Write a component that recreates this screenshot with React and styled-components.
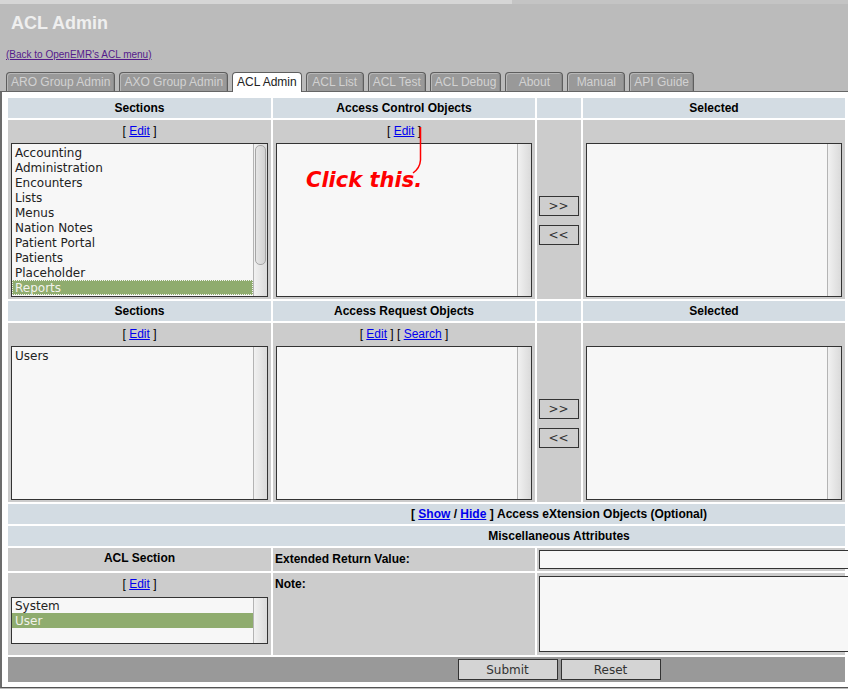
import React from "react"
import styled, { createGlobalStyle } from "styled-components"

const GlobalStyle = createGlobalStyle`
  html, body {
    margin: 0;
    padding: 0;
    overflow: hidden;
    background: #bbb;
  }
  body {
    font-family: "Liberation Sans", Arial, sans-serif;
  }
`

const Page = styled.div`
  position: relative;
  width: 848px;
  height: 689px;
  overflow: hidden;
  background: #bbb;
`

const TopStrip = styled.div`
  height: 4px;
  background: linear-gradient(to right, #d6d6d6 512px, #c4c4c4 512px);
`

const Header = styled.header`
  padding-top: 9px;
`

const Title = styled.h1`
  margin: 0;
  padding-left: 11px;
  font-size: 18px;
  line-height: 21px;
  font-weight: bold;
  color: #efefef;
`

const BackLink = styled.a`
  display: inline-block;
  margin: 15px 0 0 6px;
  font-size: 10px;
  line-height: 12px;
  color: #551a8b;
  text-decoration: underline;
`

const TabBar = styled.nav`
  display: flex;
  align-items: flex-end;
  margin-top: 10px;
  padding-left: 6px;
  border-bottom: 1px solid #666;
`

const Tab = styled.div`
  box-sizing: border-box;
  min-width: 58px;
  margin-right: 4px;
  padding: 2px 4px 2px;
  font-size: 12px;
  line-height: 14px;
  text-align: center;
  white-space: nowrap;
  border: 1px solid #5e5e5e;
  border-bottom: none;
  border-radius: 4px 4px 0 0;
  background: ${({ $active }) => ($active ? "#fff" : "#999")};
  color: ${({ $active }) => ($active ? "#222" : "#d2d2d2")};
  box-shadow: ${({ $active }) =>
    $active ? "none" : "inset 1px 1px 0 #b8b8b8, inset -1px 0 0 #8a8a8a"};
  margin-bottom: ${({ $active }) => ($active ? "-1px" : "0")};
  padding-bottom: ${({ $active }) => ($active ? "3px" : "2px")};
`

const Frame = styled.main`
  background: #fff;
  border-left: 2px solid #6c6c6c;
  border-bottom: 1px solid #555;
  padding: 6px 0 5px 6px;
`

const Grid = styled.div`
  display: grid;
  grid-template-columns: 263px 262px 44px 262px;
  grid-template-rows: 20px 179px 20px 179px 20px 20px 23px 82px 25px;
  gap: 2px;
  width: 837px;
`

const HeadCell = styled.div`
  grid-column: ${({ $span }) => $span || "auto"};
  display: flex;
  align-items: center;
  justify-content: center;
  padding-left: ${({ $offset }) => ($offset ? "265px" : "0")};
  background: #d3dce3;
  font-size: 12px;
  font-weight: bold;
  color: #000;
  white-space: nowrap;
`

const BodyCell = styled.div`
  grid-column: ${({ $span }) => $span || "auto"};
  box-sizing: border-box;
  display: flex;
  flex-direction: column;
  padding: 3px 3px 2px;
  background: #ccc;
  min-width: 0;
`

const EditLine = styled.div`
  height: 14px;
  padding-top: 1px;
  margin-bottom: ${({ $gap }) => $gap || 5}px;
  font-size: 12px;
  line-height: 15px;
  text-align: center;
  color: #000;
  white-space: nowrap;
`

const Link = styled.a`
  color: #0000ee;
  text-decoration: underline;
  cursor: pointer;
`

const ListBox = styled.div`
  box-sizing: border-box;
  display: flex;
  height: ${({ $height }) => $height}px;
  border: 1px solid #333;
  background: #f7f7f7;
  overflow: hidden;
`

const ListItems = styled.div`
  flex: 1;
  padding: ${({ $pad }) => $pad}px 0;
  overflow: hidden;
  font-family: "DejaVu Sans", sans-serif;
  font-size: 12px;
`

const Item = styled.div`
  box-sizing: border-box;
  height: 15px;
  padding: 1px 0 0 3px;
  line-height: 15px;
  white-space: nowrap;
  color: ${({ $selected }) => ($selected ? "#f2f2ec" : "#222")};
  background: ${({ $selected }) => ($selected ? "#8fac6e" : "transparent")};
  outline: ${({ $focused }) => ($focused ? "1px dotted #f4f4f4" : "none")};
  outline-offset: -1px;
`

const ScrollTrack = styled.div`
  box-sizing: border-box;
  width: 14px;
  flex: none;
  padding: 1px 0 0 1px;
  border-left: 1px solid #b4b4b4;
  background: linear-gradient(to right, #f1f1f1, #dadada);
`

const Thumb = styled.div`
  box-sizing: border-box;
  width: 11px;
  border: 1px solid #a6a6a6;
  border-radius: 5px;
  background: linear-gradient(to right, #e6e6e6, #d2d2d2);
`

const MoveCell = styled.div`
  display: flex;
  flex-direction: column;
  align-items: center;
  justify-content: center;
  gap: 9px;
  padding: 23px 1px 2px 0;
  background: #ccc;
`

const MoveButton = styled.button`
  box-sizing: border-box;
  width: 40px;
  height: 20px;
  padding: 0;
  border: 1px solid #333;
  background: #cecece;
  font-family: "DejaVu Sans", sans-serif;
  font-size: 12px;
  color: #333;
`

const LabelCell = styled.div`
  box-sizing: border-box;
  padding: ${({ $center }) => ($center ? "3px 0 0" : "4px 2px 0")};
  background: #ccc;
  font-size: 12px;
  line-height: 15px;
  font-weight: bold;
  color: #000;
  text-align: ${({ $center }) => ($center ? "center" : "left")};
  white-space: nowrap;
`

const FieldCell = styled.div`
  grid-column: 3 / 5;
  box-sizing: border-box;
  padding: ${({ $pad }) => $pad};
  background: #ccc;
  min-width: 0;
`

const TextInput = styled.input`
  box-sizing: border-box;
  display: block;
  width: 330px;
  height: 19px;
  margin: 0;
  border: 1px solid #333;
  background: #f7f7f7;
`

const TextArea = styled.textarea`
  box-sizing: border-box;
  display: block;
  width: 330px;
  height: 76px;
  margin: 0;
  border: 1px solid #333;
  background: #f7f7f7;
  resize: none;
`

const Footer = styled.div`
  grid-column: 1 / 5;
  display: flex;
  align-items: center;
  justify-content: center;
  gap: 3px;
  padding-left: 265px;
  background: #999;
`

const FormButton = styled.button`
  box-sizing: border-box;
  width: 100px;
  height: 21px;
  padding: 0;
  border: 1px solid #333;
  background: #d4d4d4;
  font-family: "DejaVu Sans", sans-serif;
  font-size: 12px;
  color: #333;
`

const Annotation = styled.div`
  position: absolute;
  left: 306px;
  top: 168px;
  font-family: "DejaVu Sans", sans-serif;
  font-size: 21px;
  line-height: 24px;
  font-weight: bold;
  font-style: italic;
  color: #f00;
  white-space: nowrap;
  pointer-events: none;
`

const Pointer = styled.svg`
  position: absolute;
  left: 408px;
  top: 124px;
  pointer-events: none;
`

const tabs = [
  "ARO Group Admin",
  "AXO Group Admin",
  "ACL Admin",
  "ACL List",
  "ACL Test",
  "ACL Debug",
  "About",
  "Manual",
  "API Guide",
]

const sections = [
  "Accounting",
  "Administration",
  "Encounters",
  "Lists",
  "Menus",
  "Nation Notes",
  "Patient Portal",
  "Patients",
  "Placeholder",
  "Reports",
]

const SelectList = ({ items = [], selected, focused, height = 154, pad = 1, thumb }) => (
  <ListBox $height={height}>
    <ListItems $pad={pad}>
      {items.map(item => (
        <Item key={item} $selected={item === selected} $focused={focused && item === selected}>
          {item}
        </Item>
      ))}
    </ListItems>
    <ScrollTrack>{thumb && <Thumb style={{ height: thumb }} />}</ScrollTrack>
  </ListBox>
)

const Edit = ({ children }) => (
  <>
    [ <Link>Edit</Link> ]{children}
  </>
)

const Mover = () => (
  <MoveCell>
    <MoveButton>&gt;&gt;</MoveButton>
    <MoveButton>&lt;&lt;</MoveButton>
  </MoveCell>
)

export default function App() {
  return (
    <Page>
      <GlobalStyle />
      <TopStrip />
      <Header>
        <Title>ACL Admin</Title>
        <BackLink>(Back to OpenEMR's ACL menu)</BackLink>
        <TabBar>
          {tabs.map(t => (
            <Tab key={t} $active={t === "ACL Admin"}>
              {t}
            </Tab>
          ))}
        </TabBar>
      </Header>

      <Frame>
        <Grid>
          <HeadCell>Sections</HeadCell>
          <HeadCell>Access Control Objects</HeadCell>
          <HeadCell />
          <HeadCell>Selected</HeadCell>

          <BodyCell>
            <EditLine><Edit /></EditLine>
            <SelectList items={sections} selected="Reports" focused thumb={120} />
          </BodyCell>
          <BodyCell>
            <EditLine><Edit /></EditLine>
            <SelectList />
          </BodyCell>
          <Mover />
          <BodyCell>
            <EditLine />
            <SelectList />
          </BodyCell>

          <HeadCell>Sections</HeadCell>
          <HeadCell>Access Request Objects</HeadCell>
          <HeadCell />
          <HeadCell>Selected</HeadCell>

          <BodyCell>
            <EditLine><Edit /></EditLine>
            <SelectList items={["Users"]} />
          </BodyCell>
          <BodyCell>
            <EditLine>
              <Edit> [ <Link>Search</Link> ]</Edit>
            </EditLine>
            <SelectList />
          </BodyCell>
          <Mover />
          <BodyCell>
            <EditLine />
            <SelectList />
          </BodyCell>

          <HeadCell $span="1 / 5" $offset>
            [&nbsp;<Link>Show</Link>&nbsp;/&nbsp;<Link>Hide</Link>&nbsp;]&nbsp;Access eXtension Objects (Optional)
          </HeadCell>
          <HeadCell $span="1 / 5" $offset>Miscellaneous Attributes</HeadCell>

          <LabelCell $center>ACL Section</LabelCell>
          <LabelCell>Extended Return Value:</LabelCell>
          <FieldCell $pad="2px 0 0 2px">
            <TextInput />
          </FieldCell>

          <BodyCell>
            <EditLine $gap={6}><Edit /></EditLine>
            <SelectList items={["System", "User"]} selected="User" height={47} pad={0} />
          </BodyCell>
          <LabelCell>Note:</LabelCell>
          <FieldCell $pad="3px 0 0 2px">
            <TextArea />
          </FieldCell>

          <Footer>
            <FormButton>Submit</FormButton>
            <FormButton>Reset</FormButton>
          </Footer>
        </Grid>
      </Frame>

      <Annotation>Click this.</Annotation>
      <Pointer width="16" height="52" viewBox="0 0 16 52">
        <path d="M12.5 3 L12.5 36 Q12 44 5 49" fill="none" stroke="#f00" strokeWidth="1.5" />
      </Pointer>
    </Page>
  )
}
